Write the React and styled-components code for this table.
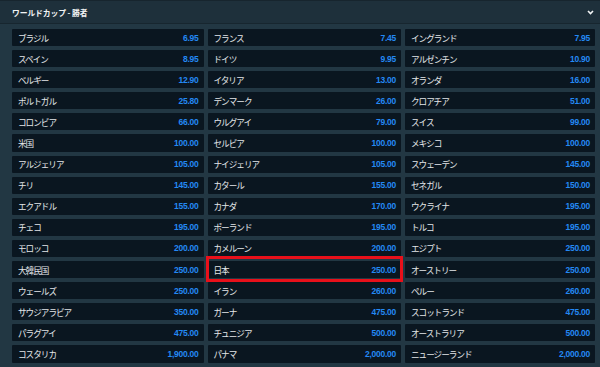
import React from "react";
import styled, { createGlobalStyle } from "styled-components";

const GlobalStyle = createGlobalStyle`
  html, body {
    margin: 0;
    padding: 0;
    background: #223743;
  }
  body {
    font-family: "Noto Sans CJK JP", "Liberation Sans", sans-serif;
  }
`;

const Panel = styled.div`
  width: 600px;
  height: 367px;
  background: #223743;
  overflow: hidden;
  box-sizing: border-box;
  border-top: 1px solid #17252e;
`;

const Header = styled.div`
  height: 22px;
  display: flex;
  align-items: center;
  justify-content: space-between;
  padding: 0 6px 0 12px;
  background: #1e303b;
  border-bottom: 1px solid #17262f;
`;

const Title = styled.span`
  color: #f2f4f5;
  font-size: 7.8px;
  font-weight: 700;
  letter-spacing: -0.1px;
`;

const Grid = styled.div`
  display: grid;
  grid-template-columns: 191.5px 193.5px 1fr;
  grid-auto-rows: 17.1px;
  gap: 4px;
  padding: 5px 5px 0 12px;
`;

const Cell = styled.div`
  position: relative;
  display: flex;
  align-items: center;
  justify-content: space-between;
  padding: 0 5px 0 6px;
  background: #0a1620;
  border-radius: 1px;
`;

const Name = styled.span`
  color: #e3e6e9;
  font-size: 8.6px;
  letter-spacing: -1px;
  white-space: nowrap;
`;

const Odds = styled.span`
  color: #2489f4;
  font-family: "Liberation Sans", sans-serif;
  font-size: 8.5px;
  font-weight: 700;
  letter-spacing: -0.25px;
`;

const Highlight = styled.span`
  position: absolute;
  top: -5px;
  bottom: -4px;
  left: -2px;
  right: -2px;
  border: 3px solid #e8101a;
  pointer-events: none;
`;

const rows = [
  [["ブラジル", "6.95"], ["フランス", "7.45"], ["イングランド", "7.95"]],
  [["スペイン", "8.95"], ["ドイツ", "9.95"], ["アルゼンチン", "10.90"]],
  [["ベルギー", "12.90"], ["イタリア", "13.00"], ["オランダ", "16.00"]],
  [["ポルトガル", "25.80"], ["デンマーク", "26.00"], ["クロアチア", "51.00"]],
  [["コロンビア", "66.00"], ["ウルグアイ", "79.00"], ["スイス", "99.00"]],
  [["米国", "100.00"], ["セルビア", "100.00"], ["メキシコ", "100.00"]],
  [["アルジェリア", "105.00"], ["ナイジェリア", "105.00"], ["スウェーデン", "145.00"]],
  [["チリ", "145.00"], ["カタール", "155.00"], ["セネガル", "150.00"]],
  [["エクアドル", "155.00"], ["カナダ", "170.00"], ["ウクライナ", "195.00"]],
  [["チェコ", "195.00"], ["ポーランド", "195.00"], ["トルコ", "195.00"]],
  [["モロッコ", "200.00"], ["カメルーン", "200.00"], ["エジプト", "250.00"]],
  [["大韓民国", "250.00"], ["日本", "250.00"], ["オーストリー", "250.00"]],
  [["ウェールズ", "250.00"], ["イラン", "260.00"], ["ペルー", "260.00"]],
  [["サウジアラビア", "350.00"], ["ガーナ", "475.00"], ["スコットランド", "475.00"]],
  [["パラグアイ", "475.00"], ["チュニジア", "500.00"], ["オーストラリア", "500.00"]],
  [["コスタリカ", "1,900.00"], ["パナマ", "2,000.00"], ["ニュージーランド", "2,000.00"]],
];

const Chevron = () => (
  <svg width="7" height="5" viewBox="0 0 7 5">
    <polyline
      points="1,1 3.5,3.5 6,1"
      fill="none"
      stroke="#f2f4f5"
      strokeWidth="1.6"
    />
  </svg>
);

const App = () => {
  return (
    <>
      <GlobalStyle />
      <Panel>
        <Header>
          <Title>ワールドカップ - 勝者</Title>
          <Chevron />
        </Header>
        <Grid>
          {rows.flat().map(([name, odds]) => (
            <Cell key={name}>
              <Name>{name}</Name>
              <Odds>{odds}</Odds>
              {name === "日本" && <Highlight />}
            </Cell>
          ))}
        </Grid>
      </Panel>
    </>
  );
};

export default App;
